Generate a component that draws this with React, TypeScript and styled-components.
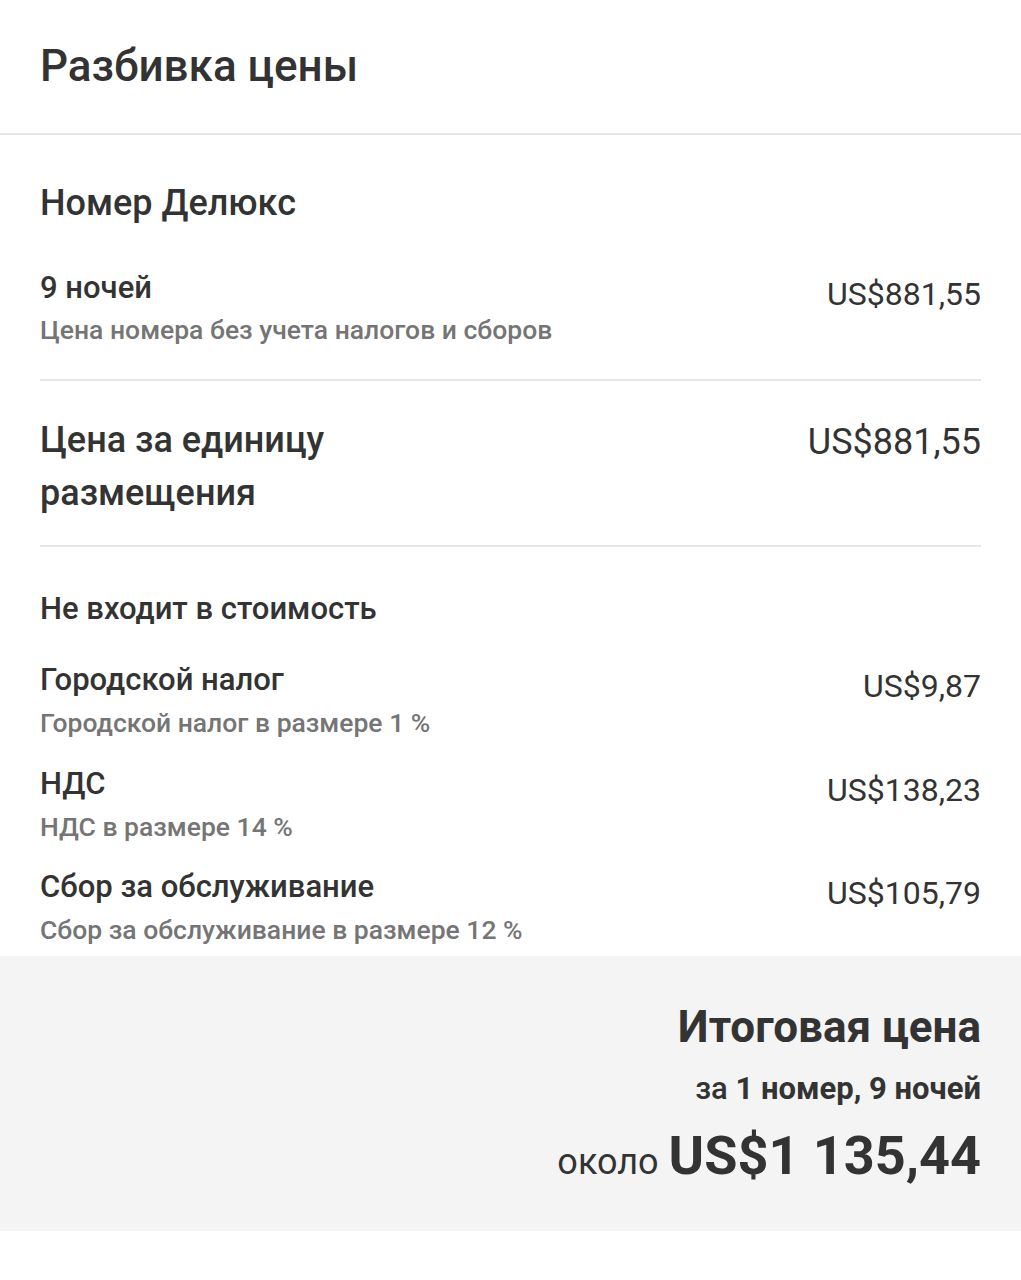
import React from 'react';
import styled, { createGlobalStyle } from 'styled-components';

const GlobalStyle = createGlobalStyle`
  html, body {
    margin: 0;
    padding: 0;
    background: #ffffff;
  }
  body {
    font-family: Roboto, "Noto Sans", "Liberation Sans", sans-serif;
    color: #333333;
    -webkit-font-smoothing: antialiased;
  }
`;

const Page = styled.div`
  width: 1021px;
  min-height: 1280px;
  background: #ffffff;
`;

const Header = styled.header`
  padding: 39px 40px 40px;
  border-bottom: 2px solid #e6e6e6;
`;

const Title = styled.h1`
  margin: 0;
  font-size: 44px;
  line-height: 54px;
  font-weight: 500;
  color: #333333;
`;

const Body = styled.section`
  padding: 0 40px;
`;

const RoomName = styled.h2`
  margin: 0;
  padding-top: 46px;
  font-size: 36px;
  line-height: 44px;
  font-weight: 500;
  color: #333333;
`;

const Divider = styled.hr`
  margin: 0;
  border: 0;
  height: 2px;
  background: #e6e6e6;
`;

const Row = styled.div<{ $top: number; $bottom?: number }>`
  display: flex;
  justify-content: space-between;
  align-items: flex-start;
  gap: 24px;
  padding-top: ${p => p.$top}px;
  padding-bottom: ${p => p.$bottom || 0}px;
`;

const Info = styled.div`
  display: flex;
  flex-direction: column;
`;

const ItemName = styled.div`
  font-size: 31px;
  line-height: 36px;
  font-weight: 500;
  color: #333333;
`;

const ItemNote = styled.div<{ $gap: number }>`
  margin-top: ${p => p.$gap}px;
  font-size: 26.5px;
  line-height: 32px;
  font-weight: 500;
  color: #757575;
`;

const Price = styled.div<{ $big?: boolean }>`
  margin-top: ${p => (p.$big ? 2 : 6)}px;
  font-size: ${p => (p.$big ? 36 : 32)}px;
  line-height: ${p => (p.$big ? 53 : 36)}px;
  font-weight: 400;
  color: #333333;
  white-space: nowrap;
`;

const UnitLabel = styled.div`
  max-width: 420px;
  font-size: 36px;
  line-height: 53px;
  font-weight: 500;
  color: #333333;
`;

const SectionLabel = styled.div`
  padding-top: 44px;
  font-size: 31px;
  line-height: 36px;
  font-weight: 500;
  color: #333333;
`;

const TotalBox = styled.footer`
  margin-top: 10px;
  padding: 46px 40px 37px;
  background: #f4f4f4;
  display: flex;
  flex-direction: column;
  align-items: flex-end;
`;

const TotalTitle = styled.div`
  font-size: 44px;
  line-height: 50px;
  font-weight: 700;
  color: #333333;
`;

const TotalFor = styled.div`
  margin-top: 20px;
  font-size: 31px;
  line-height: 34px;
  font-weight: 700;
  color: #333333;

  span {
    font-weight: 500;
  }
`;

const TotalLine = styled.div`
  margin-top: 18px;
  display: flex;
  align-items: baseline;
  gap: 10px;
  line-height: 64px;
  color: #333333;
`;

const About = styled.span`
  font-size: 36px;
  font-weight: 400;
`;

const TotalAmount = styled.span`
  font-size: 54px;
  font-weight: 700;
`;

interface Fee {
  name: string;
  note: string;
  price: string;
}

const fees: Array<Fee> = [
  { name: 'Городской налог', note: 'Городской налог в размере 1 %', price: 'US$9,87' },
  { name: 'НДС', note: 'НДС в размере 14 %', price: 'US$138,23' },
  { name: 'Сбор за обслуживание', note: 'Сбор за обслуживание в размере 12 %', price: 'US$105,79' },
];

export default function App() {
  return (
    <Page>
      <GlobalStyle />
      <Header>
        <Title>Разбивка цены</Title>
      </Header>

      <Body>
        <RoomName>Номер Делюкс</RoomName>

        <Row $top={45} $bottom={33}>
          <Info>
            <ItemName>9 ночей</ItemName>
            <ItemNote $gap={8}>Цена номера без учета налогов и сборов</ItemNote>
          </Info>
          <Price>US$881,55</Price>
        </Row>
        <Divider />

        <Row $top={33} $bottom={25}>
          <UnitLabel>Цена за единицу размещения</UnitLabel>
          <Price $big>US$881,55</Price>
        </Row>
        <Divider />

        <SectionLabel>Не входит в стоимость</SectionLabel>
        {fees.map((fee, i) => (
          <Row key={i} $top={i === 0 ? 35 : i === 1 ? 27 : 26}>
            <Info>
              <ItemName>{fee.name}</ItemName>
              <ItemNote $gap={9}>{fee.note}</ItemNote>
            </Info>
            <Price>{fee.price}</Price>
          </Row>
        ))}
      </Body>

      <TotalBox>
        <TotalTitle>Итоговая цена</TotalTitle>
        <TotalFor><span>за</span> 1 номер, 9 ночей</TotalFor>
        <TotalLine>
          <About>около</About>
          <TotalAmount>US$1 135,44</TotalAmount>
        </TotalLine>
      </TotalBox>
    </Page>
  );
}
